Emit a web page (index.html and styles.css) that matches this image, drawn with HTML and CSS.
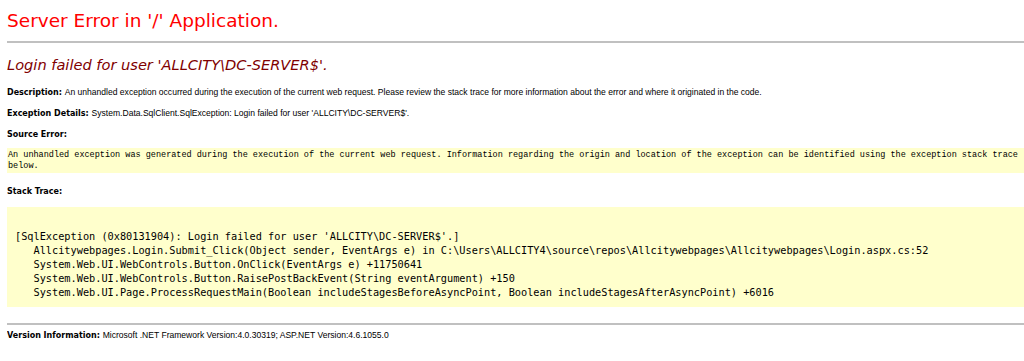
FILE: index.html
```
<!DOCTYPE html>
<html>
<head>
    <meta charset="UTF-8">
    <title>Login failed for user 'ALLCITY\DC-SERVER$'.</title>
    <link rel="stylesheet" href="styles.css">
</head>
<body>
    <span><h1>Server Error in '/' Application.<hr class="rule"></h1>

    <h2><i>Login failed for user 'ALLCITY\DC-SERVER$'.</i></h2></span>

    <p class="line">
        <b>Description: </b>An unhandled exception occurred during the execution of the current web request. Please review the stack trace for more information about the error and where it originated in the code.
    </p>

    <p class="line">
        <b>Exception Details: </b>System.Data.SqlClient.SqlException: Login failed for user 'ALLCITY\DC-SERVER$'.
    </p>

    <p class="label"><b>Source Error:</b></p>

    <div class="source">
        <code>An unhandled exception was generated during the execution of the current web request. Information regarding the origin and location of the exception can be identified using the exception stack trace below.</code>
    </div>

    <p class="label stack-label"><b>Stack Trace:</b></p>

    <div class="stack">
<pre>

[SqlException (0x80131904): Login failed for user 'ALLCITY\DC-SERVER$'.]
   Allcitywebpages.Login.Submit_Click(Object sender, EventArgs e) in C:\Users\ALLCITY4\source\repos\Allcitywebpages\Allcitywebpages\Login.aspx.cs:52
   System.Web.UI.WebControls.Button.OnClick(EventArgs e) +11750641
   System.Web.UI.WebControls.Button.RaisePostBackEvent(String eventArgument) +150
   System.Web.UI.Page.ProcessRequestMain(Boolean includeStagesBeforeAsyncPoint, Boolean includeStagesAfterAsyncPoint) +6016
</pre>
    </div>

    <hr class="rule bottom">

    <p class="line version">
        <b>Version Information: </b>Microsoft .NET Framework Version:4.0.30319; ASP.NET Version:4.6.1055.0
    </p>
</body>
</html>
```

FILE: styles.css
```
body {
    font-family: "DejaVu Sans", Verdana, sans-serif;
    font-size: 8.4px;
    color: black;
    background: #fff;
    margin: 0 0 0 7px;
}
h1 {
    font-family: "DejaVu Sans", Verdana, sans-serif;
    font-weight: normal;
    font-size: 18.5px;
    line-height: 22px;
    color: red;
    margin: 10px 0 0 0;
}
h2 {
    font-family: "DejaVu Sans", Verdana, sans-serif;
    font-weight: normal;
    font-size: 14.6px;
    line-height: 18px;
    color: maroon;
    margin: 13px 0 0 0;
}
.rule {
    border: none;
    height: 2px;
    background: #c0c0c0;
    margin: 9px 0 0 0;
}
.rule.bottom {
    margin-top: 16px;
}
p {
    margin: 0;
}
.line {
    font-family: "Liberation Sans", Arial, sans-serif;
    font-size: 8.55px;
    line-height: 12px;
    margin-top: 8px;
}
.line:first-of-type {
    margin-top: 12px;
}
b {
    font-family: "DejaVu Sans", Verdana, sans-serif;
    font-weight: bold;
    font-size: 8px;
}
.label {
    line-height: 12px;
    margin-top: 8px;
}
.stack-label {
    margin-top: 12px;
}
.source {
    background: #ffffcc;
    margin-top: 7px;
    padding: 2px 2px 2px 1px;
}
.source code {
    font-family: "Liberation Mono", "Courier New", monospace;
    font-size: 8.5px;
    line-height: 10.5px;
    display: block;
}
.stack {
    background: #ffffcc;
    margin-top: 9px;
    padding: 0 0 0 1px;
}
.stack pre {
    font-family: "DejaVu Sans Mono", Consolas, monospace;
    font-size: 10.25px;
    line-height: 14px;
    margin: 0;
    padding: 8px 7px 8px 7px;
}
.version {
    margin-top: 4px;
}
```
